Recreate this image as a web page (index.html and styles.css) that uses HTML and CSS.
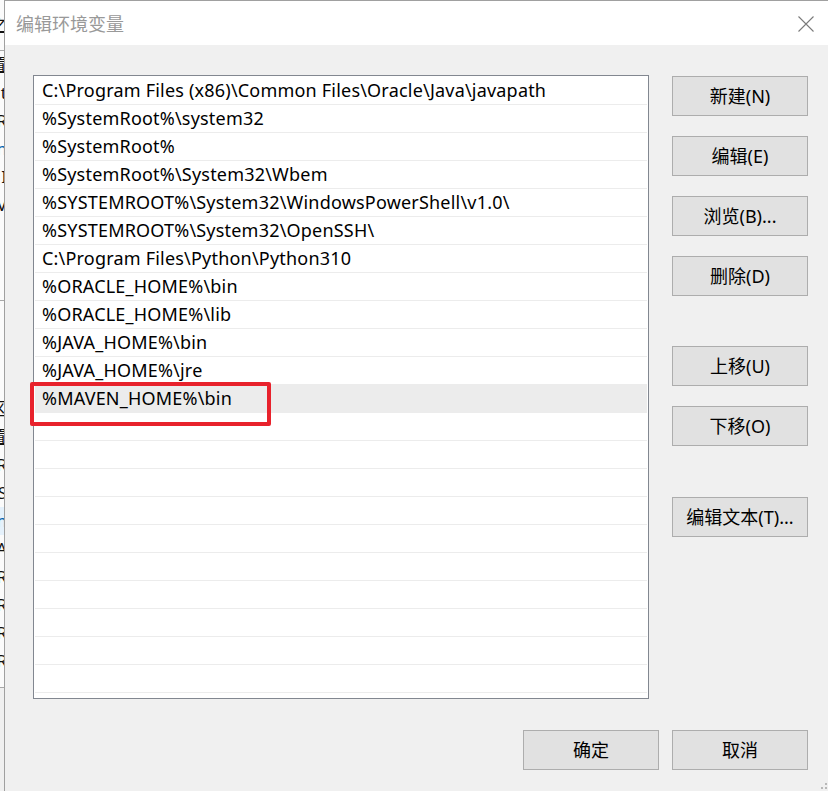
FILE: index.html
```html
<!DOCTYPE html>
<html lang="zh-CN">
<head>
<meta charset="utf-8">
<title>编辑环境变量</title>
<link rel="stylesheet" href="styles.css">
</head>
<body>
<div class="screen">
  <div class="bgwin">
    <div class="bg-head"><span class="bg-g u">之</span></div>
    <div class="bg-sec1">
      <div class="bg-line"><span class="bg-g u">置</span></div>
      <div class="bg-line"><span class="bg-g">t</span></div>
      <div class="bg-line"><span class="bg-g">R</span></div>
      <div class="bg-line"><span class="bg-g blue">n</span></div>
      <div class="bg-line"><span class="bg-g">I</span></div>
      <div class="bg-line"><span class="bg-g">V</span></div>
    </div>
    <div class="bg-sec2">
      <div class="bg-line"><span class="bg-g">区</span></div>
      <div class="bg-line"><span class="bg-g u">置</span></div>
      <div class="bg-line"><span class="bg-g">R</span></div>
      <div class="bg-line"><span class="bg-g">S</span></div>
      <div class="bg-line hl"><span class="bg-g blue">n</span></div>
      <div class="bg-line"><span class="bg-g">A</span></div>
      <div class="bg-line"><span class="bg-g">R</span></div>
      <div class="bg-line"><span class="bg-g">R</span></div>
      <div class="bg-line"><span class="bg-g">R</span></div>
      <div class="bg-line"><span class="bg-g">R</span></div>
    </div>
    <div class="bg-foot"></div>
  </div>

  <div class="dialog">
    <div class="titlebar">
      <span class="title">编辑环境变量</span>
      <svg class="close" width="16" height="16" viewBox="0 0 16 16" aria-label="关闭">
        <path d="M0.5 0.5 L15.5 15.5 M15.5 0.5 L0.5 15.5" stroke="#7a7a7a" stroke-width="1.1" fill="none"/>
      </svg>
    </div>

    <div class="body">
      <div class="main">
        <div class="listbox">
          <div class="rows">
            <div class="row">C:\Program Files (x86)\Common Files\Oracle\Java\javapath</div>
            <div class="row">%SystemRoot%\system32</div>
            <div class="row">%SystemRoot%</div>
            <div class="row">%SystemRoot%\System32\Wbem</div>
            <div class="row">%SYSTEMROOT%\System32\WindowsPowerShell\v1.0\</div>
            <div class="row">%SYSTEMROOT%\System32\OpenSSH\</div>
            <div class="row">C:\Program Files\Python\Python310</div>
            <div class="row">%ORACLE_HOME%\bin</div>
            <div class="row">%ORACLE_HOME%\lib</div>
            <div class="row">%JAVA_HOME%\bin</div>
            <div class="row">%JAVA_HOME%\jre</div>
            <div class="row selected">%MAVEN_HOME%\bin</div>
            <div class="row"></div>
            <div class="row"></div>
            <div class="row"></div>
            <div class="row"></div>
            <div class="row"></div>
            <div class="row"></div>
            <div class="row"></div>
            <div class="row"></div>
            <div class="row"></div>
            <div class="row"></div>
            <div class="row"></div>
          </div>
          <div class="mark"></div>
        </div>

        <div class="side">
          <button class="btn">新建(N)</button>
          <button class="btn">编辑(E)</button>
          <button class="btn">浏览(B)...</button>
          <button class="btn">删除(D)</button>
          <button class="btn sep1">上移(U)</button>
          <button class="btn">下移(O)</button>
          <button class="btn sep2">编辑文本(T)...</button>
        </div>
      </div>

      <div class="footer">
        <button class="btn">确定</button>
        <button class="btn">取消</button>
      </div>
      <svg class="grip" width="12" height="12" viewBox="0 0 12 12" aria-hidden="true">
        <rect x="9" y="1" width="2" height="2" fill="#b8b8b8"/>
        <rect x="5" y="5" width="2" height="2" fill="#b8b8b8"/>
        <rect x="9" y="5" width="2" height="2" fill="#b8b8b8"/>
        <rect x="1" y="9" width="2" height="2" fill="#b8b8b8"/>
        <rect x="5" y="9" width="2" height="2" fill="#b8b8b8"/>
        <rect x="9" y="9" width="2" height="2" fill="#b8b8b8"/>
      </svg>
    </div>
  </div>
</div>
</body>
</html>
```

FILE: styles.css
```css
* {
  box-sizing: border-box;
}

html, body {
  margin: 0;
  padding: 0;
}

body {
  width: 828px;
  height: 791px;
  overflow: hidden;
  background: #f0f0f0;
  font-family: "Noto Sans", "Noto Sans CJK SC", sans-serif;
  color: #000;
}

.screen {
  display: flex;
  width: 828px;
  height: 791px;
}

/* background window strip on the far left */
.bgwin {
  width: 4px;
  flex: none;
  display: flex;
  flex-direction: column;
  overflow: hidden;
  background: #f0f0f0;
}

.bg-head {
  height: 51px;
  background: #fbfbfb;
  border-bottom: 1px solid #a8a8a8;
  display: flex;
  justify-content: flex-end;
  align-items: center;
}

.bg-sec1 {
  height: 250px;
  background: #fbfbfb;
  border-bottom: 1px solid #a8a8a8;
  display: flex;
  flex-direction: column;
}

.bg-sec2 {
  height: 387px;
  padding-top: 94px;
  background: #fbfbfb;
  border-bottom: 1px solid #a8a8a8;
  display: flex;
  flex-direction: column;
}

.bg-foot {
  flex: 1;
  background: #f0f0f0;
}

.bg-line {
  height: 28px;
  flex: none;
  display: flex;
  justify-content: flex-end;
  align-items: center;
}

.bg-line.hl {
  background: #e5f1fb;
}

.bg-g {
  font-size: 17px;
  line-height: 20px;
  white-space: nowrap;
  margin-right: -3px;
  color: #111;
}

.bg-g.u {
  text-decoration: underline;
}

.bg-g.blue {
  color: #0063b1;
}

/* dialog */
.dialog {
  flex: 1;
  display: flex;
  flex-direction: column;
  border-left: 1px solid #a0a0a0;
  border-top: 1px solid #a0a0a0;
  background: #f0f0f0;
}

.titlebar {
  height: 44px;
  flex: none;
  background: #ffffff;
  display: flex;
  align-items: center;
  justify-content: space-between;
  padding-left: 11px;
  padding-right: 14px;
}

.title {
  font-family: "Noto Sans CJK SC", sans-serif;
  font-size: 18px;
  color: #999999;
  letter-spacing: 0;
}

.close {
  display: block;
  margin-top: 1px;
}

.body {
  flex: 1;
  position: relative;
  padding: 30px 20px 0 28px;
}

.main {
  display: flex;
  gap: 23px;
}

.listbox {
  position: relative;
  width: 616px;
  height: 624px;
  flex: none;
  border: 1px solid #828790;
  background: #ffffff;
}

.rows {
  height: 100%;
  overflow: hidden;
  padding-top: 1px;
}

.row {
  height: 28px;
  margin: 0 1px;
  border-bottom: 1px solid #ececec;
  padding-left: 7px;
  font-size: 18px;
  letter-spacing: 0.2px;
  line-height: 27px;
  white-space: nowrap;
  color: #000;
}

.row.selected {
  background: #ececec;
}

.mark {
  position: absolute;
  left: -4px;
  top: 306px;
  width: 241px;
  height: 44px;
  border: 4px solid #e8222c;
  border-radius: 2px;
}

.side {
  display: flex;
  flex-direction: column;
  gap: 20px;
  padding-top: 1px;
}

.btn {
  width: 136px;
  height: 40px;
  border: 1px solid #adadad;
  background: #e1e1e1;
  font-family: "Noto Sans", "Noto Sans CJK SC", sans-serif;
  font-size: 18px;
  color: #000;
  padding: 0;
  margin: 0;
  line-height: 38px;
  text-align: center;
}

.btn.sep1 {
  margin-top: 30px;
}

.btn.sep2 {
  margin-top: 31px;
}

.footer {
  display: flex;
  justify-content: flex-end;
  gap: 13px;
  margin-top: 31px;
}

.grip {
  position: absolute;
  right: 0;
  bottom: -3px;
}
```
